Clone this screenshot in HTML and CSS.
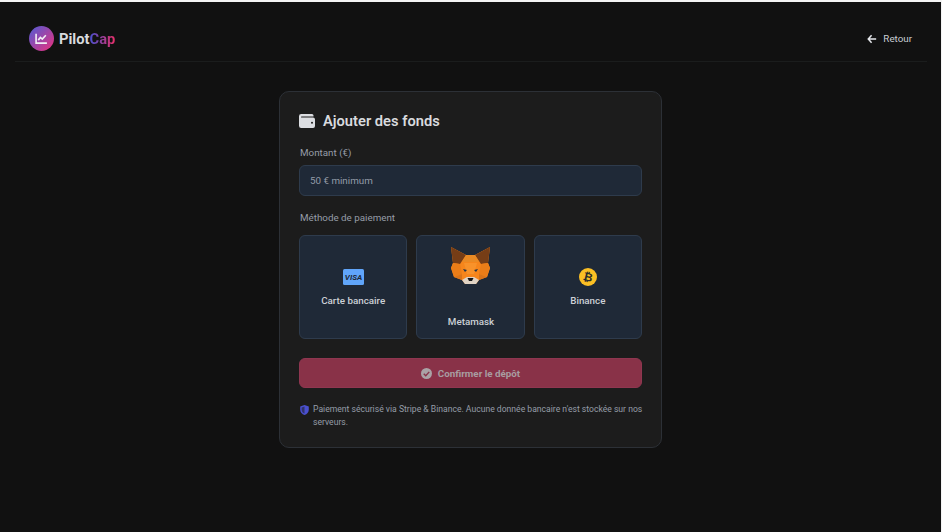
FILE: index.html
```html
<!DOCTYPE html>
<html lang="fr">
<head>
<meta charset="utf-8">
<title>PilotCap</title>
<link rel="stylesheet" href="styles.css">
</head>
<body>
<div class="page">
  <header class="header">
    <a class="brand">
      <span class="logo">
        <svg viewBox="0 0 24 24" width="13" height="13"><path d="M2 3v17.500h20" fill="none" stroke="#f1eef5" stroke-width="3"/><path d="M6 15l4-5 3.500 3L20 6" fill="none" stroke="#f1eef5" stroke-width="3"/></svg>
      </span>
      <span class="brand-name">Pilot<span class="brand-accent">Cap</span></span>
    </a>
    <a class="back">
      <svg viewBox="0 0 24 24" width="10" height="10"><path d="M11 3L3 12l8 9M3 12h19" fill="none" stroke="#e5e7eb" stroke-width="3.600"/></svg>
      <span>Retour</span>
    </a>
  </header>
  <main class="main">
    <section class="card">
      <h1 class="title">
        <svg viewBox="0 0 16 14" width="16" height="14"><path d="M2.200 0H13a1.500 1.500 0 0 1 1.500 1.500V2.400H2.600a.6.6 0 0 0 0 1.200H14A2 2 0 0 1 16 5.600V12a2 2 0 0 1-2 2H2.200A2.200 2.200 0 0 1 0 11.800V2.200A2.200 2.200 0 0 1 2.200 0z" fill="#dcdee2"/><circle cx="13" cy="8.800" r="1" fill="#1c1c1c"/></svg>
        <span>Ajouter des fonds</span>
      </h1>
      <label class="label">Montant (€)</label>
      <div class="input">50 € minimum</div>
      <div class="label label-method">Méthode de paiement</div>
      <div class="methods">
        <div class="method">
          <svg class="visa" viewBox="0 0 21 16" width="21" height="16"><rect width="21" height="16" rx="1.500" fill="#60a5fa"/><text x="10.500" y="11" text-anchor="middle" class="visa-text">VISA</text></svg>
          <span class="method-name">Carte bancaire</span>
        </div>
        <div class="method method-fox">
          <svg viewBox="0 0 40 38" width="40" height="38" class="fox">
            <polygon points="0,0 17,9 22,9 39,0 37,16 39,21 36,30 28,33 25,37 14,37 11,33 3,30 0,21 2,16" fill="#f6851b"/>
            <polygon points="0,0 15,8 9,17 2,16" fill="#763d16"/>
            <polygon points="39,0 24,8 30,17 37,16" fill="#763d16"/>
            <polygon points="15,8 24,8 28,15 11,15" fill="#e98a24"/>
            <polygon points="0,21 2,16 9,17 11,27 3,30" fill="#ea7d18"/>
            <polygon points="39,21 37,16 30,17 28,27 36,30" fill="#ea7d18"/>
            <polygon points="13,16 26,16 23,27 16,27" fill="#f8922a"/>
            <polygon points="3,30 11,27 11,33" fill="#d9741a"/>
            <polygon points="36,30 28,27 28,33" fill="#d9741a"/>
            <polygon points="12,22 16,23 14,25" fill="#233447"/>
            <polygon points="27,22 23,23 25,25" fill="#233447"/>
            <polygon points="11,33 16,30 23,30 28,33 25,37 14,37" fill="#e0d3c4"/>
            <polygon points="16.500,31 22.500,31 21,34 18,34" fill="#161616"/>
          </svg>
          <span class="method-name">Metamask</span>
        </div>
        <div class="method">
          <svg viewBox="0 0 18 18" width="18" height="18"><circle cx="9" cy="9" r="9" fill="#fbbf24"/><text x="9" y="13" text-anchor="middle" transform="rotate(14 9 9)" class="btc-text">₿</text></svg>
          <span class="method-name">Binance</span>
        </div>
      </div>
      <button class="confirm" type="button">
        <svg viewBox="0 0 12 12" width="11" height="11"><circle cx="6" cy="6" r="6" fill="#aaa3a6"/><path d="M3 6.200l2.200 2.200L9 4.200" fill="none" stroke="#893248" stroke-width="1.500"/></svg>
        <span>Confirmer le dépôt</span>
      </button>
      <div class="note">
        <svg class="shield" viewBox="0 0 12 14" width="9" height="10"><path d="M6 0l6 2.200v4.300C12 10 9.500 12.800 6 14 2.500 12.800 0 10 0 6.500V2.200z" fill="#4a50cf"/><path d="M6 2v10C3.800 11 2 9.200 2 6.500V3.500z" fill="#1c1c1c" opacity=".55"/></svg>
        <p>Paiement sécurisé via Stripe &amp; Binance. Aucune donnée bancaire n'est stockée sur nos serveurs.</p>
      </div>
    </section>
  </main>
</div>
</body>
</html>
```

FILE: styles.css
```css
* { box-sizing: border-box; }
html, body { margin: 0; height: 100%; }
body {
  background: #111111;
  border-top: 2px solid #f4f4f4;
  border-right: 1px solid #f4f4f4;
  font-family: Roboto, "Liberation Sans", sans-serif;
  color: #e5e7eb;
  overflow: hidden;
}
.page { padding: 0 14px 0 15px; }
.header {
  height: 60px;
  display: flex;
  align-items: center;
  justify-content: space-between;
  padding: 14px 15px 0 14px;
  border-bottom: 1px solid #1b1d1d;
}
.brand { display: flex; align-items: center; gap: 5px; }
.logo {
  width: 25px; height: 25px; border-radius: 50%;
  background: linear-gradient(135deg, #4f5cd6, #ec2f7b);
  display: flex; align-items: center; justify-content: center;
}
.brand-name { font-size: 14.700px; font-weight: 700; color: #d8dade; }
.brand-accent {
  background: linear-gradient(90deg, #4a50d0, #e82f68);
  -webkit-background-clip: text; background-clip: text; color: transparent;
}
.back { display: flex; align-items: center; gap: 6px; font-size: 9.800px; color: #c8ccd2; }
.main { display: flex; justify-content: center; padding-top: 29px; }
.card {
  width: 383px; height: 357px;
  margin-right: 1px;
  background: #1c1c1c;
  border: 1px solid #2c3036;
  border-radius: 10px;
  padding: 19px 19px;
}
.title {
  margin: 0; display: flex; align-items: center; gap: 8px;
  font-size: 14.700px; font-weight: 600; color: #d8dade; height: 20px;
}
.label { display: block; font-size: 9.800px; color: #969da8; margin-top: 15px; line-height: 13px; padding-left: 1px; }
.label-method { margin-top: 15px; }
.input {
  margin-top: 6px; height: 31px;
  background: #1f2937; border: 1px solid #2e3b4c; border-radius: 6px;
  padding: 0 10px; display: flex; align-items: center;
  font-size: 9.800px; color: #939ba8;
}
.methods { display: grid; grid-template-columns: repeat(3, 1fr); gap: 9px; margin-top: 11px; }
.method {
  height: 104px; padding-top: 1px;
  background: #1f2937; border: 1px solid #2e3b4c; border-radius: 6px;
  display: flex; flex-direction: column; align-items: center; justify-content: center; gap: 8px;
}
.method-fox { justify-content: flex-start; padding: 11px 0 0 1px; gap: 30px; }
.method-name { font-size: 9.800px; font-weight: 500; color: #ccd0d6; line-height: 13px; }
.visa { margin: 1px 0; }
.visa-text { font: italic 700 8px Roboto, sans-serif; fill: #1f2937; }
.btc-text { font: 700 11.500px "DejaVu Sans", sans-serif; fill: #2a2a2a; }
.confirm {
  width: 100%; height: 30px; margin-top: 19px;
  background: #893248; border: 1px solid #8f3650; border-radius: 6px;
  display: flex; align-items: center; justify-content: center; gap: 6px;
  font: 700 9.800px Roboto, sans-serif; color: #a89da1;
}
.note { display: flex; gap: 4px; margin: 15px -4px 0 0; padding-left: 1px; }
.shield { flex: none; margin-top: 2px; }
.note p { margin: 0; font-size: 8.600px; line-height: 12.600px; color: #969da8; }
```
